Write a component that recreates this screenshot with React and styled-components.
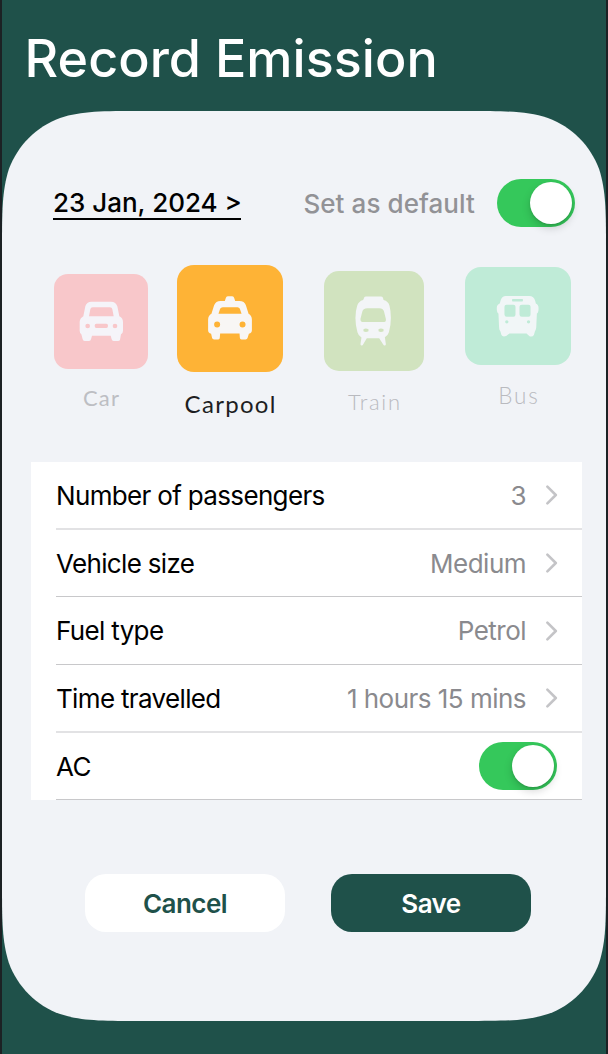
import React, { useState } from "react";
import styled, { createGlobalStyle } from "styled-components";

const GlobalStyle = createGlobalStyle`
  * { box-sizing: border-box; }
  body { margin: 0; font-family: Inter, "Liberation Sans", sans-serif; }
  button { font: inherit; border: 0; padding: 0; cursor: pointer; }
`;

const Screen = styled.main`
  width: 608px;
  height: 1054px;
  display: flex;
  flex-direction: column;
  background: #1f514a;
  border: solid #1c2124;
  border-width: 0 2px;
  overflow: hidden;
`;

const Title = styled.h1`
  margin: 0;
  height: 111px;
  flex: none;
  padding: 27px 0 0 22.5px;
  font-size: 52px;
  line-height: 63px;
  font-weight: 500;
  letter-spacing: 0.05px;
  color: #fff;
  white-space: nowrap;
`;

const Panel = styled.section`
  width: 604px;
  height: 910px;
  flex: none;
  display: flex;
  flex-direction: column;
  background: #f1f3f7;
  clip-path: path("M0 140.6C0 100.1 0 79.9 6.9 58.1C15.6 34.3 34.3 15.6 58.1 6.9C79.9 0 100.1 0 140.6 0H463.4C503.9 0 524.1 0 545.9 6.9C569.7 15.6 588.4 34.3 597.1 58.1C604 79.9 604 100.1 604 140.6V769.4C604 809.9 604 830.1 597.1 851.9C588.4 875.7 569.7 894.4 545.9 903.1C524.1 910 503.9 910 463.4 910H140.6C100.1 910 79.9 910 58.1 903.1C34.3 894.4 15.6 875.7 6.9 851.9C0 830.1 0 809.9 0 769.4Z");
`;

const TopBar = styled.div`
  display: flex;
  align-items: center;
  height: 48px;
  margin: 68px 31px 0 51px;
`;

const DateButton = styled.button`
  width: 188px;
  height: 33px;
  margin-top: 1px;
  background: none;
  border-bottom: 2px solid #000;
  font-size: 26px;
  line-height: 31px;
  font-weight: 500;
  text-align: left;
  white-space: nowrap;
  color: #000;
`;

const DefaultLabel = styled.span`
  margin-left: auto;
  margin-right: 22px;
  padding-top: 1px;
  font-size: 26px;
  line-height: 32px;
  font-weight: 500;
  letter-spacing: 0.08px;
  color: #929296;
  white-space: nowrap;
`;

const Track = styled.button`
  width: 78px;
  height: 48px;
  flex: none;
  display: flex;
  align-items: center;
  justify-content: ${(p) => (p.$on ? "flex-end" : "flex-start")};
  padding: 0 3px;
  border-radius: 24px;
  background: ${(p) => (p.$on ? "#35c85b" : "#e1e1e5")};
`;

const Knob = styled.span`
  width: 42px;
  height: 42px;
  border-radius: 50%;
  background: #fff;
  box-shadow: 0 4px 8px rgba(0, 0, 0, 0.17), 0 1px 2px rgba(0, 0, 0, 0.12);
`;

const Modes = styled.div`
  display: flex;
  align-items: flex-start;
  height: 170px;
  margin: 38px 0 0 52px;
`;

const Mode = styled.div`
  flex: none;
  width: ${(p) => p.$w}px;
  margin-top: ${(p) => p.$top}px;
  margin-right: ${(p) => p.$gap}px;
  display: flex;
  flex-direction: column;
  align-items: center;
`;

const Tile = styled.div`
  width: 100%;
  height: ${(p) => p.$h}px;
  border-radius: ${(p) => p.$r}px;
  background: ${(p) => p.$color};
  svg { display: block; width: 100%; height: 100%; }
`;

const ModeName = styled.span`
  margin-top: ${(p) => p.$offset}px;
  font-family: Lato, sans-serif;
  font-size: ${(p) => p.$size}px;
  font-weight: ${(p) => p.$weight};
  line-height: 30px;
  letter-spacing: ${(p) => p.$spacing}px;
  margin-right: -${(p) => p.$spacing}px;
  color: ${(p) => p.$color};
`;

const List = styled.div`
  width: 551px;
  margin: 27px 0 0 29px;
  padding-left: 25px;
  background: #fff;
`;

const Row = styled.div`
  display: flex;
  align-items: center;
  height: ${(p) => (p.$soft ? 68 : p.$h)}px;
  padding-right: 24px;
  border-bottom: ${(p) => (p.$soft ? "2px solid #e2e2e4" : "1px solid #c8c8ca")};
  font-size: 26px;
  line-height: 32px;
  white-space: nowrap;
`;

const RowLabel = styled.span`
  padding-top: 1px;
  letter-spacing: -0.66px;
  color: #000;
`;

const RowValue = styled.span`
  margin-left: auto;
  padding-top: 1px;
  letter-spacing: -0.52px;
  color: #8a8a8e;
`;

const Chevron = styled.svg`
  flex: none;
  width: 12px;
  height: 20px;
  margin-left: 20px;
`;

const Push = styled.div`
  margin-left: auto;
  margin-right: 1px;
`;

const Actions = styled.div`
  display: flex;
  gap: 46px;
  margin: 74px 0 0 83px;
`;

const Action = styled.button`
  width: 200px;
  height: 58px;
  border-radius: 21px;
  font-size: 26px;
  font-weight: 600;
  letter-spacing: -0.55px;
  background: ${(p) => (p.$primary ? "#1f514a" : "#fff")};
  color: ${(p) => (p.$primary ? "#fff" : "#1f514a")};
`;

function CarIcon() {
  return (
    <svg viewBox="42 54 282 285" preserveAspectRatio="none">
      <path fill="#f5f4f9" fillRule="evenodd" d="M155 137H213Q228 137 232 151L238 181Q249 186 249 199V224Q249 231 243 235L240 251Q239 255 234 255H221Q216 255 215 250L212 239H156L153 250Q152 255 147 255H134Q129 255 128 250L124 235Q119 231 119 224V199Q119 187 130 181L136 151Q139 137 155 137ZM158 154Q152 154 151 160L147 181H221L217 160Q216 154 210 154ZM143 203A7 7 0 1 0 143 217A7 7 0 1 0 143 203ZM225 203A7 7 0 1 0 225 217A7 7 0 1 0 225 203ZM169 203Q164 203 164 209Q164 216 169 216H199Q204 216 204 209Q204 203 199 203Z" />
    </svg>
  );
}

function TaxiIcon() {
  return (
    <svg viewBox="36 29 317 322" preserveAspectRatio="none">
      <path fill="#f8f6f5" fillRule="evenodd" d="M188 123H201Q206 123 207 128L210 137H222Q238 137 242 150L250 176Q260 182 260 194V225Q260 233 251 236L247 249Q246 253 241 253H229Q224 253 224 248L223 235H165L164 248Q164 253 159 253H147Q142 253 141 249L138 236Q129 233 129 225V194Q129 182 139 176L147 150Q152 137 166 137H179L182 128Q183 123 188 123ZM173 156Q167 156 165 161L160 176H229L224 161Q222 156 217 156ZM156 199A9 9 0 1 0 156 217A9 9 0 1 0 156 199ZM232 199A9 9 0 1 0 232 217A9 9 0 1 0 232 199Z" />
    </svg>
  );
}

function TrainIcon() {
  return (
    <svg viewBox="43 46 299 302" preserveAspectRatio="none">
      <path fill="#f3f5f7" fillRule="evenodd" d="M168 123H214Q219 123 220 129L221 133Q236 137 239 151Q243 166 243 187Q243 210 237 230Q234 241 225 245L228 266Q227 272 221 268L208 248H171L159 268Q154 273 152 266L155 246Q146 241 143 230Q137 210 137 187Q137 166 142 151Q146 137 160 133L162 129Q163 123 168 123ZM173 158Q159 158 157 170L152 190Q152 199 158 199H223Q229 199 228 190L223 170Q221 158 208 158ZM161 221Q168 216 176 221V227Q168 232 161 227ZM206 221Q213 216 221 221V227Q213 232 206 227Z" />
    </svg>
  );
}

function BusIcon() {
  return (
    <svg viewBox="45 35 317 293" preserveAspectRatio="none">
      <path fill="#f1f6f7" fillRule="evenodd" d="M167 122H237Q251 122 255 137L257 144Q265 147 265 158Q265 171 260 174L258 217Q257 223 254 228L251 238Q247 245 238 242L229 234H178L168 241Q158 245 154 238L151 228Q147 223 147 217L145 174Q140 171 140 158Q140 147 149 144L152 134Q156 122 167 122ZM187 131Q184 134 187 138H217Q220 134 217 131ZM169 148Q163 148 163 154V177Q163 184 170 184H190Q196 184 196 177V154Q196 148 190 148ZM215 148Q208 148 208 154V177Q208 184 215 184H235Q241 184 241 177V154Q241 148 235 148ZM170 194A5 5 0 1 0 170 204A5 5 0 1 0 170 194ZM235 194A5 5 0 1 0 235 204A5 5 0 1 0 235 194Z" />
    </svg>
  );
}

const modes = [
  { name: "Car", Icon: CarIcon, w: 94, h: 95, top: 8.5, gap: 29, r: 14, color: "#f8c7ca", text: "#bdbec3", size: 22, spacing: 1.2, offset: 14, weight: 400 },
  { name: "Carpool", Icon: TaxiIcon, w: 106, h: 107, top: 0, gap: 41, r: 17, color: "#feb336", text: "#1d1e22", size: 24, spacing: 1.3, offset: 17, weight: 400 },
  { name: "Train", Icon: TrainIcon, w: 100, h: 100.5, top: 5.5, gap: 41, r: 15, color: "#d1e3bf", text: "#b9babf", size: 22, spacing: 1.7, offset: 16, weight: 300 },
  { name: "Bus", Icon: BusIcon, w: 106, h: 98, top: 1.5, gap: 0, r: 16, color: "#bfebd7", text: "#b9babf", size: 22.5, spacing: 1.8, offset: 16, weight: 300 },
];

const rows = [
  { label: "Number of passengers", value: "3", soft: true },
  { label: "Vehicle size", value: "Medium", h: 67 },
  { label: "Fuel type", value: "Petrol", h: 68 },
  { label: "Time travelled", value: "1 hours 15 mins", soft: true },
];

function Toggle({ label }) {
  const [on, setOn] = useState(true);
  return (
    <Track role="switch" aria-checked={on} aria-label={label} $on={on} onClick={() => setOn(!on)}>
      <Knob />
    </Track>
  );
}

export default function App() {
  return (
    <>
      <GlobalStyle />
      <Screen>
        <Title>Record Emission</Title>
        <Panel>
          <TopBar>
            <DateButton>23 Jan, 2024 &gt;</DateButton>
            <DefaultLabel>Set as default</DefaultLabel>
            <Toggle label="Set as default" />
          </TopBar>
          <Modes>
            {modes.map(({ name, Icon, ...m }) => (
              <Mode key={name} $w={m.w} $top={m.top} $gap={m.gap}>
                <Tile $h={m.h} $r={m.r} $color={m.color}><Icon /></Tile>
                <ModeName $size={m.size} $weight={m.weight} $spacing={m.spacing} $color={m.text} $offset={m.offset}>{name}</ModeName>
              </Mode>
            ))}
          </Modes>
          <List>
            {rows.map((r) => (
              <Row key={r.label} $soft={r.soft} $h={r.h}>
                <RowLabel>{r.label}</RowLabel>
                <RowValue>{r.value}</RowValue>
                <Chevron viewBox="0 0 12 20" fill="none" stroke="#c4c4c7" strokeWidth="2.6" strokeLinecap="round" strokeLinejoin="round">
                  <path d="M1.4 1.7L9.8 10L1.4 18.3" />
                </Chevron>
              </Row>
            ))}
            <Row $h={67}>
              <RowLabel>AC</RowLabel>
              <Push><Toggle label="AC" /></Push>
            </Row>
          </List>
          <Actions>
            <Action>Cancel</Action>
            <Action $primary>Save</Action>
          </Actions>
        </Panel>
      </Screen>
    </>
  );
}
